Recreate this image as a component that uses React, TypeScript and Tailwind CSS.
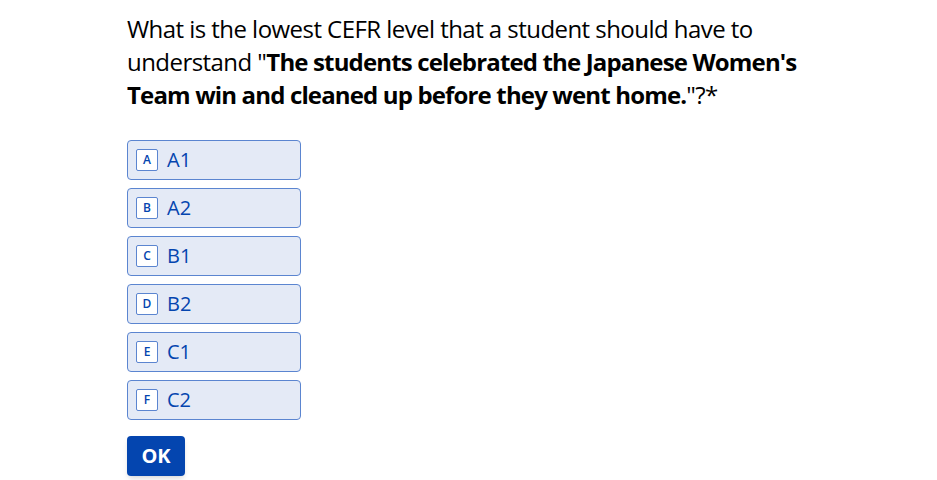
const options = [
  { key: "A", label: "A1" },
  { key: "B", label: "A2" },
  { key: "C", label: "B1" },
  { key: "D", label: "B2" },
  { key: "E", label: "C1" },
  { key: "F", label: "C2" },
];

export default function App() {
  return (
    <div className="min-h-[480px] bg-white pl-[127px] pt-[12px] font-['Open_Sans',sans-serif]">
      <h1 className="text-[24px] leading-[33px] font-normal tracking-[-0.55px] text-black">
        <span className="whitespace-nowrap">What is the lowest CEFR level that a student should have to</span>
        <br />
        <span className="whitespace-nowrap">
          understand "<b className="font-bold tracking-[-0.85px]">The students celebrated the Japanese Women's</b>
        </span>
        <br />
        <span className="whitespace-nowrap">
          <b className="font-bold tracking-[-0.85px]">Team win and cleaned up before they went home.</b>"?*
        </span>
      </h1>

      <div className="mt-[29px] flex w-[174px] flex-col gap-2">
        {options.map((o) => (
          <button
            key={o.key}
            className="flex h-[40px] items-center rounded-[4px] border border-[#5b85d0] bg-[#e4eaf6] px-[8px] text-left"
          >
            <span className="flex h-[22px] w-[22px] items-center justify-center rounded-[2px] border border-[#5b85d0] bg-white text-[12px] font-semibold text-[#0445af]">
              {o.key}
            </span>
            <span className="ml-[9px] text-[20px] text-[#0445af]">{o.label}</span>
          </button>
        ))}
      </div>

      <button className="mt-[16px] flex h-[40px] w-[58px] items-center justify-center rounded-[4px] bg-[#0445af] text-[20px] font-bold text-white shadow-md">
        OK
      </button>
    </div>
  );
}
